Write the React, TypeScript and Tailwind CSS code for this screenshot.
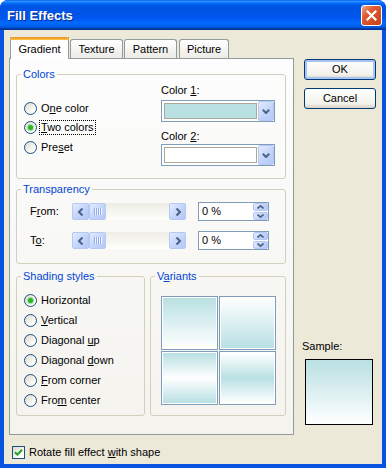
import type { ReactNode } from "react";

function U({ children }: { children: ReactNode }) {
  return <span className="underline decoration-1 underline-offset-[1px]">{children}</span>;
}

function Radio({ checked = false }: { checked?: boolean }) {
  return (
    <span className="flex h-[13px] w-[13px] shrink-0 items-center justify-center rounded-full border border-[#1c5180] bg-[linear-gradient(135deg,#dcd8cb,#ffffff_80%)]">
      {checked ? (
        <span className="h-[5px] w-[5px] rounded-full bg-[#2db22a] shadow-[0_0_0_1px_#9be596]" />
      ) : null}
    </span>
  );
}

function RadioRow({
  label,
  checked,
  focused,
  className = "",
}: {
  label: ReactNode;
  checked?: boolean;
  focused?: boolean;
  className?: string;
}) {
  return (
    <div className={`flex items-center ${className}`}>
      <Radio checked={checked} />
      <span
        className={`ml-[2px] border px-[1px] ${
          focused ? "border-dotted border-black" : "border-transparent"
        }`}
      >
        {label}
      </span>
    </div>
  );
}

function Group({
  title,
  className = "",
  children,
}: {
  title: ReactNode;
  className?: string;
  children: ReactNode;
}) {
  return (
    <fieldset className={`rounded-[3px] border border-[#d0d0bf] ${className}`}>
      <legend className="ml-[4px] px-[2px] leading-[13px] text-[#0046d5]">{title}</legend>
      {children}
    </fieldset>
  );
}

const blueBtn =
  "border border-[#b5c8f3] bg-[linear-gradient(135deg,#e3ebfe,#c3d4fb_55%,#b4c8f8)]";

function ScrollArrow({ left }: { left?: boolean }) {
  return (
    <span className={`flex h-[17px] w-[17px] shrink-0 items-center justify-center rounded-[2px] ${blueBtn}`}>
      <svg width="8" height="8" viewBox="0 0 8 8">
        <path
          d={left ? "M5.5 0.5 2 4l3.5 3.5" : "M2.5 0.5 6 4 2.5 7.5"}
          fill="none"
          stroke="#4d6185"
          strokeWidth="2"
        />
      </svg>
    </span>
  );
}

function Slider() {
  return (
    <div className="flex h-[17px] w-[114px] bg-[linear-gradient(to_bottom,#eeede5,#fefefb)]">
      <ScrollArrow left />
      <span className={`flex h-[17px] w-[17px] shrink-0 items-center justify-center gap-[1px] rounded-[2px] ${blueBtn}`}>
        {[0, 1, 2, 3].map((i) => (
          <span key={i} className="h-[7px] w-[1px] bg-[#8eaaf0] shadow-[1px_0_0_#f0f5ff]" />
        ))}
      </span>
      <span className="flex-1" />
      <ScrollArrow />
    </div>
  );
}

function SpinBtn({ up }: { up?: boolean }) {
  return (
    <span className={`flex flex-1 items-center justify-center rounded-[2px] ${blueBtn}`}>
      <svg width="7" height="4" viewBox="0 0 7 4">
        <path
          d={up ? "M0.5 3.5 3.5 0.8 6.5 3.5" : "M0.5 0.5 3.5 3.2 6.5 0.5"}
          fill="none"
          stroke="#4d6185"
          strokeWidth="1.6"
        />
      </svg>
    </span>
  );
}

function Spin() {
  return (
    <div className="flex h-[19px] w-[71px] items-center border border-[#7f9db9] bg-white pl-[3px]">
      <span>0 %</span>
      <div className="ml-auto flex h-full w-[15px] flex-col gap-[1px]">
        <SpinBtn up />
        <SpinBtn />
      </div>
    </div>
  );
}

function Combo({ swatch }: { swatch: string }) {
  return (
    <div className="flex h-[22px] w-[114px] items-center border border-[#7f9db9] bg-white pl-[2px]">
      <span className={`h-[16px] w-[93px] border border-[#aca899] ${swatch}`} />
      <span className={`ml-auto flex h-full w-[16px] items-center justify-center rounded-[2px] ${blueBtn}`}>
        <svg width="8" height="5" viewBox="0 0 8 5">
          <path d="M0.8 0.8 4 4 7.2 0.8" fill="none" stroke="#4d6185" strokeWidth="2" />
        </svg>
      </span>
    </div>
  );
}

function TransRow({ label, className = "" }: { label: ReactNode; className?: string }) {
  return (
    <div className={`flex h-[19px] items-center pl-[13px] ${className}`}>
      <span className="w-[42px]">{label}</span>
      <Slider />
      <span className="ml-[12px]">
        <Spin />
      </span>
    </div>
  );
}

function Variant({ fill }: { fill: string }) {
  return (
    <div className="h-[54px] w-[57px] border border-[#7f9db9] bg-white p-[1px]">
      <div className={`h-full w-full ${fill}`} />
    </div>
  );
}

function Button({ label, primary }: { label: string; primary?: boolean }) {
  return (
    <div
      className={`flex h-[21px] w-[72px] items-center justify-center rounded-[3px] border border-[#003c74] bg-[linear-gradient(to_bottom,#ffffff,#f3f2ec_75%,#d9d4c8)] ${
        primary ? "shadow-[inset_0_0_0_2px_#a9c2f4]" : ""
      }`}
    >
      {label}
    </div>
  );
}

export default function App() {
  return (
    <div className="flex h-[468px] w-[386px] flex-col overflow-hidden rounded-t-[8px] bg-[#0853e0] font-['Liberation_Sans',Arial,sans-serif] text-[11px] leading-[13px] text-black">
      <div className="flex h-[30px] shrink-0 items-center bg-[linear-gradient(to_bottom,#0058ee_0%,#3593ff_4%,#288eff_6%,#127dff_8%,#036ffc_10%,#0262ee_14%,#0057e5_20%,#0054e3_24%,#0055eb_56%,#005bf5_66%,#026afe_76%,#0062ef_86%,#0052d6_92%,#0040ab_94%,#003092_100%)] pl-[7px] pr-[4px]">
        <span className="text-[13px] font-bold text-white [text-shadow:1px_1px_0_#0a2a8c]">
          Fill Effects
        </span>
        <span className="ml-auto flex h-[21px] w-[21px] items-center justify-center rounded-[3px] border border-white bg-[linear-gradient(135deg,#f2a98f,#e0592f_35%,#c4411a)]">
          <svg width="11" height="11" viewBox="0 0 11 11">
            <path d="M1.5 1.5 9.5 9.5M9.5 1.5 1.5 9.5" stroke="#ffffff" strokeWidth="2.2" strokeLinecap="square" />
          </svg>
        </span>
      </div>

      <div className="mx-[4px] mb-[4px] flex flex-1 bg-[#ece9d8] pl-[5px] pt-[7px]">
        <div className="flex w-[285px] flex-col">
          <div className="flex h-[21px] items-end pl-[1px]">
            <div className="relative z-10 -mb-[1px] flex h-[22px] w-[59px] flex-col border-x border-[#919b9c] bg-white">
              <span className="-mx-[1px] h-[3px] rounded-t-[3px] bg-[linear-gradient(to_bottom,#e68b2c,#ffc73c)]" />
              <span className="flex flex-1 items-center justify-center pb-[1px]">Gradient</span>
            </div>
            <div className="ml-[1px] flex h-[19px] w-[53px] items-center justify-center rounded-t-[3px] border-x border-t border-[#919b9c] bg-[linear-gradient(to_bottom,#ffffff,#ecebe5)]">
              Texture
            </div>
            <div className="ml-[1px] flex h-[19px] w-[53px] items-center justify-center rounded-t-[3px] border-x border-t border-[#919b9c] bg-[linear-gradient(to_bottom,#ffffff,#ecebe5)]">
              Pattern
            </div>
            <div className="ml-[2px] flex h-[19px] w-[50px] items-center justify-center rounded-t-[3px] border-x border-t border-[#919b9c] bg-[linear-gradient(to_bottom,#ffffff,#ecebe5)]">
              Picture
            </div>
          </div>

          <div className="flex h-[377px] flex-col border border-[#919b9c] bg-[linear-gradient(to_bottom,#fdfdfd,#f4f3ee)] pl-[6px] pt-[9px]">
            <Group title="Colors" className="w-[270px]">
              <div className="flex pb-[12px] pl-[7px]">
                <div className="flex w-[137px] flex-col pt-[17px]">
                  <RadioRow className="h-[20px]" label={<>O<U>n</U>e color</>} />
                  <RadioRow className="h-[19px]" checked focused label={<><U>T</U>wo colors</>} />
                  <RadioRow className="h-[20px]" label={<>Pre<U>s</U>et</>} />
                </div>
                <div className="flex w-[114px] flex-col pt-[3px]">
                  <span>
                    Color <U>1</U>:
                  </span>
                  <div className="mt-[3px]">
                    <Combo swatch="bg-[#b9e0e3]" />
                  </div>
                  <span className="mt-[8px]">
                    Color <U>2</U>:
                  </span>
                  <div className="mt-[1px]">
                    <Combo swatch="bg-white" />
                  </div>
                </div>
              </div>
            </Group>

            <Group title="Transparency" className="mt-[4px] w-[270px]">
              <div className="flex flex-col pb-[13px] pt-[6px]">
                <TransRow label={<>F<U>r</U>om:</>} />
                <TransRow className="mt-[10px]" label={<>T<U>o</U>:</>} />
              </div>
            </Group>

            <div className="mt-[6px] flex w-[270px] gap-[5px]">
              <Group title="Shading styles" className="w-[129px]">
                <div className="flex flex-col pb-[5px] pl-[7px] pt-[7px]">
                  <RadioRow className="h-[20px]" checked label="Horizontal" />
                  <RadioRow className="h-[20px]" label={<><U>V</U>ertical</>} />
                  <RadioRow className="h-[20px]" label={<>Diagonal <U>u</U>p</>} />
                  <RadioRow className="h-[20px]" label={<>Diagonal <U>d</U>own</>} />
                  <RadioRow className="h-[20px]" label={<><U>F</U>rom corner</>} />
                  <RadioRow className="h-[20px]" label={<>Fro<U>m</U> center</>} />
                </div>
              </Group>
              <Group title={<>V<U>a</U>riants</>} className="w-[136px]">
                <div className="grid w-fit grid-cols-2 gap-[1px] pl-[10px] pt-[13px]">
                  <Variant fill="bg-[linear-gradient(to_bottom,#b9e0e3,#ffffff)]" />
                  <Variant fill="bg-[linear-gradient(to_bottom,#ffffff,#b9e0e3)]" />
                  <Variant fill="bg-[linear-gradient(to_bottom,#b9e0e3,#ffffff_50%,#b9e0e3)]" />
                  <Variant fill="bg-[linear-gradient(to_bottom,#ffffff,#b9e0e3_50%,#ffffff)]" />
                </div>
              </Group>
            </div>
          </div>

          <div className="ml-[3px] mt-[11px] flex items-center">
            <span className="flex h-[13px] w-[13px] items-center justify-center border border-[#1c5180] bg-[linear-gradient(135deg,#dcd8cb,#ffffff_80%)]">
              <svg width="9" height="9" viewBox="0 0 9 9">
                <path d="M1 4.2 3.4 6.6 8 1.8" fill="none" stroke="#21a121" strokeWidth="2" />
              </svg>
            </span>
            <span className="ml-[4px]">
              Rotate fill effect <U>w</U>ith shape
            </span>
          </div>
        </div>

        <div className="ml-[10px] flex flex-col pt-[22px]">
          <Button label="OK" primary />
          <div className="mt-[8px]">
            <Button label="Cancel" />
          </div>
          <span className="ml-[-2px] mt-[231px]">Sample:</span>
          <div className="ml-[1px] mt-[6px] h-[66px] w-[68px] border border-black bg-[linear-gradient(to_bottom,#b9e0e3,#ffffff)]" />
        </div>
      </div>
    </div>
  );
}
